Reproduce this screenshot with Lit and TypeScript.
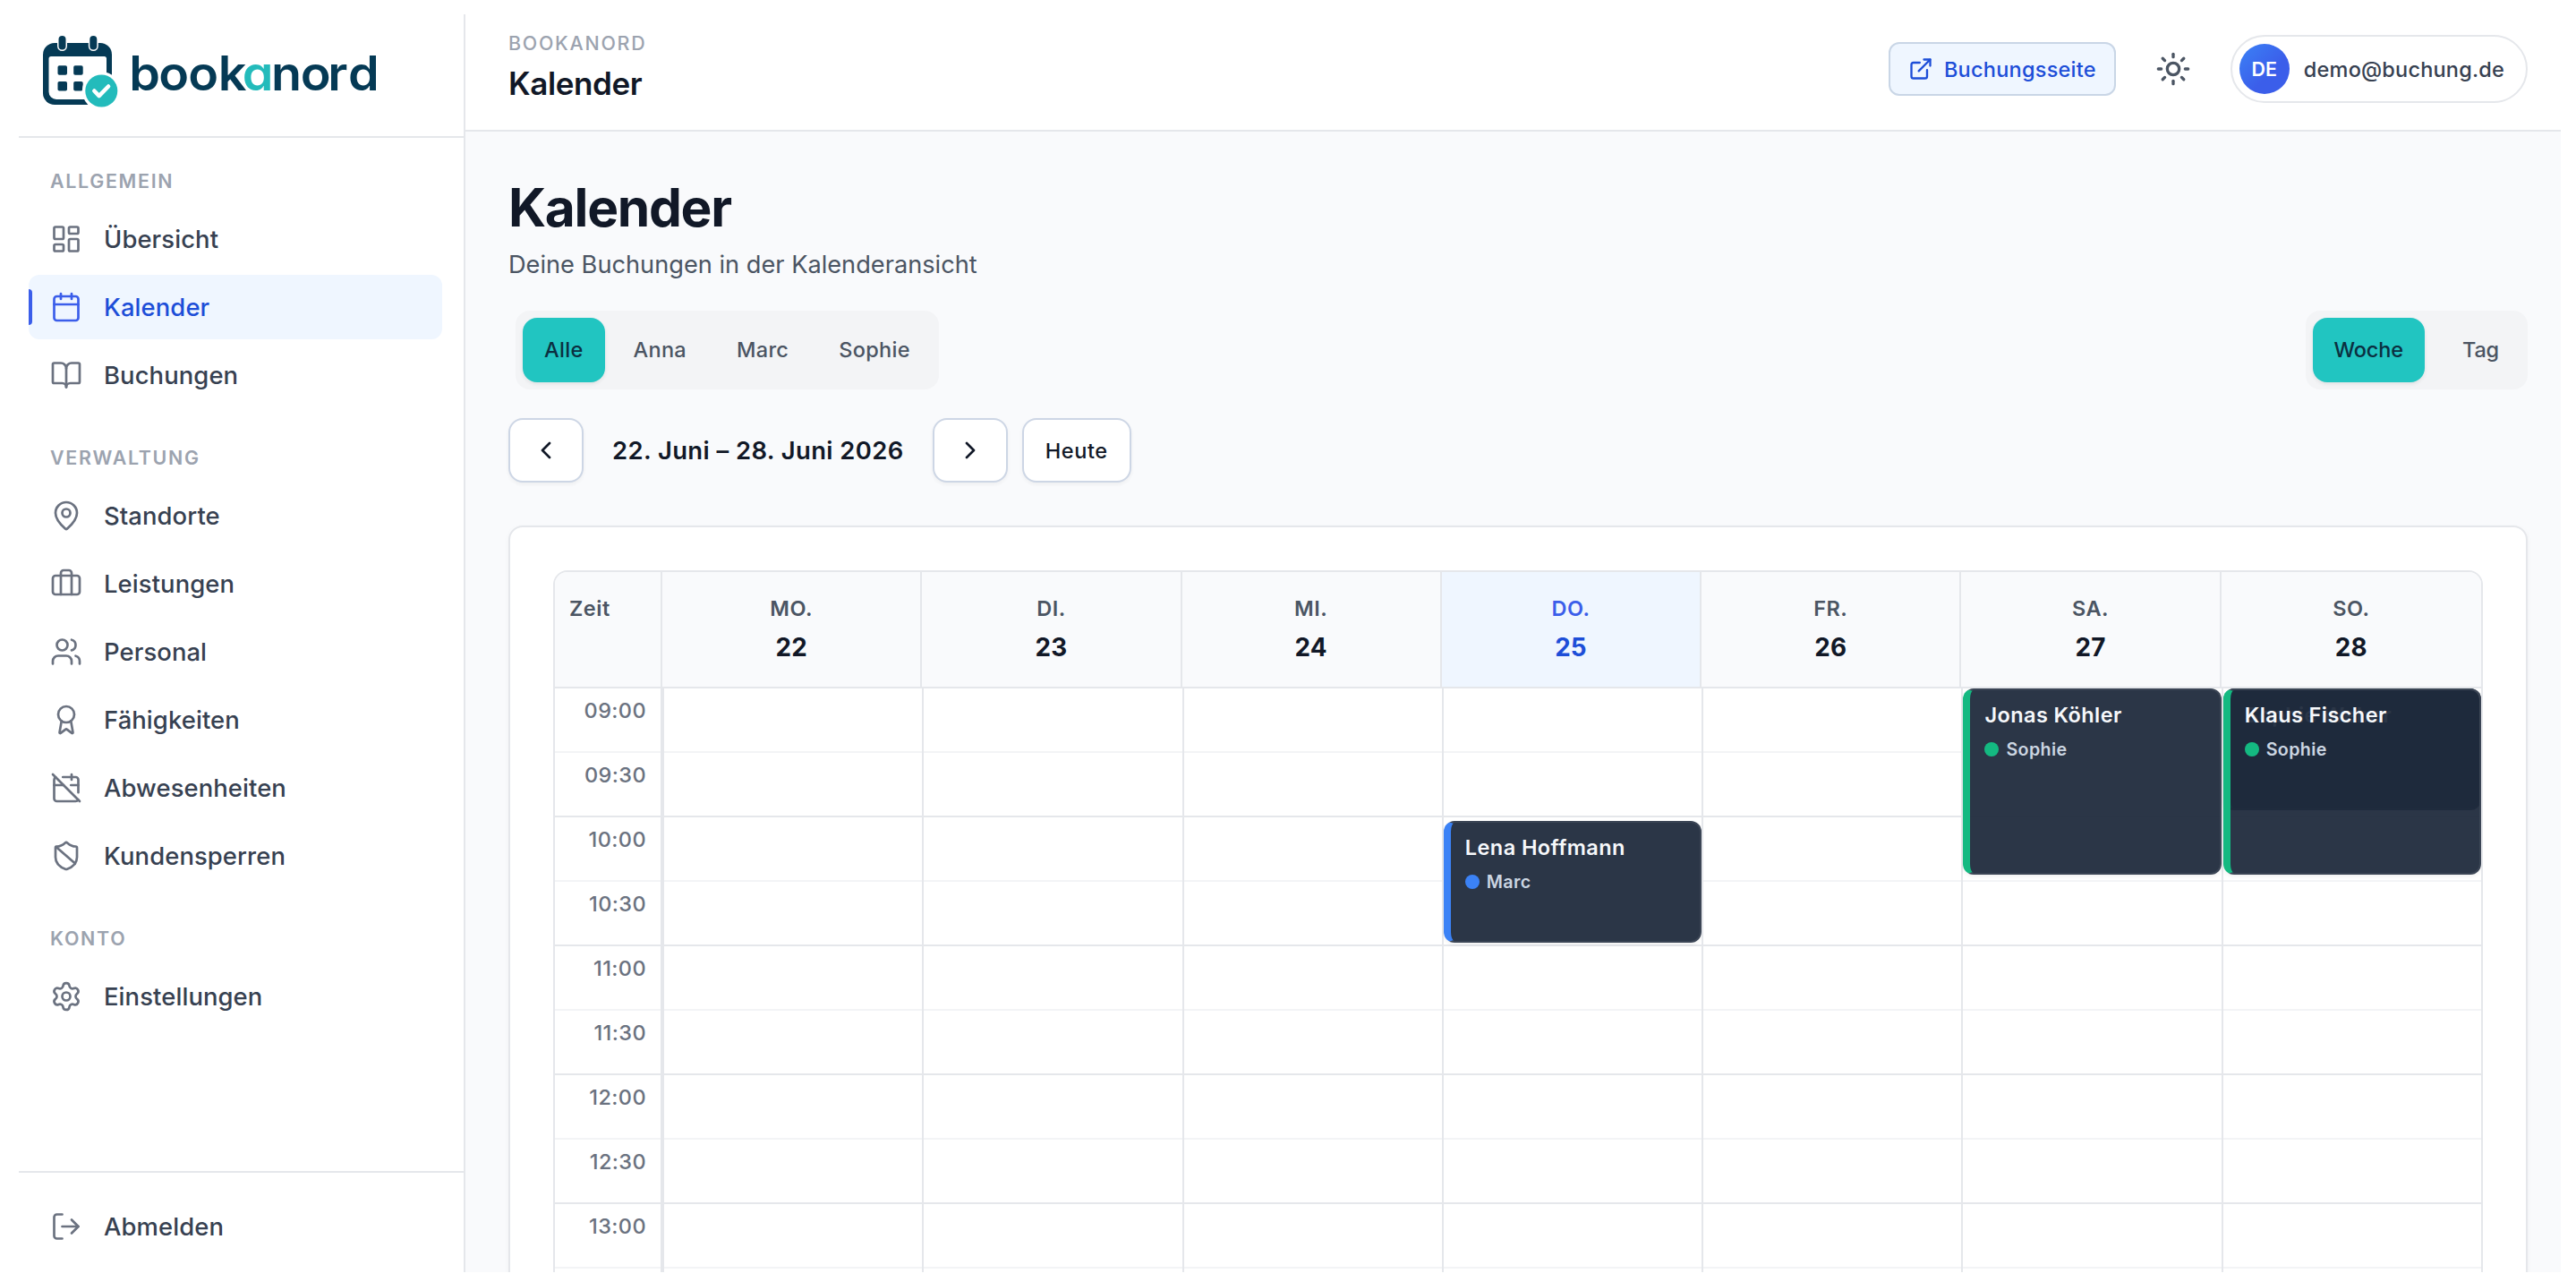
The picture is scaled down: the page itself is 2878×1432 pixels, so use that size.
import { LitElement, html, css, svg } from 'lit';
import { customElement } from 'lit/decorators.js';
import { classMap } from 'lit/directives/class-map.js';

// 24x24 stroke icons
const ICONS = {
    dashboard: svg`<rect width="7" height="9" x="3" y="3" rx="1"/><rect width="7" height="5" x="14" y="3" rx="1"/><rect width="7" height="9" x="14" y="12" rx="1"/><rect width="7" height="5" x="3" y="16" rx="1"/>`,
    calendar: svg`<path d="M8 2v4"/><path d="M16 2v4"/><rect width="18" height="18" x="3" y="4" rx="2"/><path d="M3 10h18"/>`,
    book: svg`<path d="M12 7v14"/><path d="M3 18a1 1 0 0 1-1-1V4a1 1 0 0 1 1-1h5a4 4 0 0 1 4 4 4 4 0 0 1 4-4h5a1 1 0 0 1 1 1v13a1 1 0 0 1-1 1h-6a3 3 0 0 0-3 3 3 3 0 0 0-3-3z"/>`,
    pin: svg`<path d="M20 10c0 4.993-5.539 10.193-7.399 11.799a1 1 0 0 1-1.202 0C9.539 20.193 4 14.993 4 10a8 8 0 0 1 16 0"/><circle cx="12" cy="10" r="3"/>`,
    briefcase: svg`<path d="M16 20V4a2 2 0 0 0-2-2h-4a2 2 0 0 0-2 2v16"/><rect width="20" height="14" x="2" y="6" rx="2"/>`,
    users: svg`<path d="M16 21v-2a4 4 0 0 0-4-4H6a4 4 0 0 0-4 4v2"/><circle cx="9" cy="7" r="4"/><path d="M22 21v-2a4 4 0 0 0-3-3.87"/><path d="M16 3.13a4 4 0 0 1 0 7.75"/>`,
    award: svg`<path d="m15.477 12.89 1.515 8.526a.5.5 0 0 1-.81.47l-3.58-2.687a1 1 0 0 0-1.197 0l-3.586 2.686a.5.5 0 0 1-.81-.469l1.514-8.526"/><circle cx="12" cy="8" r="6"/>`,
    calendarOff: svg`<path d="M4.2 4.2A2 2 0 0 0 3 6v14a2 2 0 0 0 2 2h14a2 2 0 0 0 1.82-1.18"/><path d="M21 15.5V6a2 2 0 0 0-2-2H9.5"/><path d="M16 2v4"/><path d="M3 10h7"/><path d="M21 10h-5.5"/><path d="m2 2 20 20"/>`,
    shield: svg`<path d="M20 13c0 5-3.5 7.5-7.66 8.95a1 1 0 0 1-.67-.01C7.5 20.5 4 18 4 13V6a1 1 0 0 1 1-1c2 0 4.5-1.2 6.24-2.72a1.17 1.17 0 0 1 1.52 0C14.51 3.81 17 5 19 5a1 1 0 0 1 1 1z"/><path d="m4.243 5.21 14.39 12.472"/>`,
    settings: svg`<path d="M9.671 4.136a2.34 2.34 0 0 1 4.659 0 2.34 2.34 0 0 0 3.319 1.915 2.34 2.34 0 0 1 2.33 4.033 2.34 2.34 0 0 0 0 3.831 2.34 2.34 0 0 1-2.33 4.033 2.34 2.34 0 0 0-3.319 1.915 2.34 2.34 0 0 1-4.659 0 2.34 2.34 0 0 0-3.32-1.915 2.34 2.34 0 0 1-2.33-4.033 2.34 2.34 0 0 0 0-3.831A2.34 2.34 0 0 1 6.35 6.051a2.34 2.34 0 0 0 3.319-1.915"/><circle cx="12" cy="12" r="3"/>`,
    logout: svg`<path d="m16 17 5-5-5-5"/><path d="M21 12H9"/><path d="M9 21H5a2 2 0 0 1-2-2V5a2 2 0 0 1 2-2h4"/>`,
    external: svg`<path d="M15 3h6v6"/><path d="M10 14 21 3"/><path d="M18 13v6a2 2 0 0 1-2 2H5a2 2 0 0 1-2-2V8a2 2 0 0 1 2-2h6"/>`,
    sun: svg`<circle cx="12" cy="12" r="4"/><path d="M12 2v2"/><path d="M12 20v2"/><path d="m4.93 4.93 1.41 1.41"/><path d="m17.66 17.66 1.41 1.41"/><path d="M2 12h2"/><path d="M20 12h2"/><path d="m6.34 17.66-1.41 1.41"/><path d="m19.07 4.93-1.41 1.41"/>`,
    left: svg`<path d="m15 18-6-6 6-6"/>`,
    right: svg`<path d="m9 18 6-6-6-6"/>`,
};

type IconName = keyof typeof ICONS;

const icon = (name: IconName, size = 36, stroke = 1.8) => html`
    <svg class="icon" width=${size} height=${size} viewBox="0 0 24 24" fill="none" stroke="currentColor"
        stroke-width=${stroke} stroke-linecap="round" stroke-linejoin="round">${ICONS[name]}</svg>
`;

interface NavItem {
    label: string;
    icon: IconName;
    active?: boolean;
}

const NAV: { title: string; items: NavItem[] }[] = [
    {
        title: 'Allgemein',
        items: [
            { label: 'Übersicht', icon: 'dashboard' },
            { label: 'Kalender', icon: 'calendar', active: true },
            { label: 'Buchungen', icon: 'book' },
        ],
    },
    {
        title: 'Verwaltung',
        items: [
            { label: 'Standorte', icon: 'pin' },
            { label: 'Leistungen', icon: 'briefcase' },
            { label: 'Personal', icon: 'users' },
            { label: 'Fähigkeiten', icon: 'award' },
            { label: 'Abwesenheiten', icon: 'calendarOff' },
            { label: 'Kundensperren', icon: 'shield' },
        ],
    },
    {
        title: 'Konto',
        items: [{ label: 'Einstellungen', icon: 'settings' }],
    },
];

interface Booking {
    name: string;
    staff: string;
    color: string;
    top: number;
    height: number;
}

const GREEN = '#14b981';
const BLUE = '#3b82f6';

const DAYS: { name: string; date: number; today?: boolean; bookings?: Booking[] }[] = [
    { name: 'Mo.', date: 22 },
    { name: 'Di.', date: 23 },
    { name: 'Mi.', date: 24 },
    { name: 'Do.', date: 25, today: true, bookings: [{ name: 'Lena Hoffmann', staff: 'Marc', color: BLUE, top: 148, height: 136 }] },
    { name: 'Fr.', date: 26 },
    { name: 'Sa.', date: 27, bookings: [{ name: 'Jonas Köhler', staff: 'Sophie', color: GREEN, top: 0, height: 208 }] },
    {
        name: 'So.',
        date: 28,
        bookings: [
            { name: 'Sophie Weber', staff: 'Sophie', color: GREEN, top: 0, height: 136 },
            { name: 'Klaus Fischer', staff: 'Sophie', color: GREEN, top: 0, height: 208 },
        ],
    },
];

const TIMES = ['09:00', '09:30', '10:00', '10:30', '11:00', '11:30', '12:00', '12:30', '13:00', '13:30'];

@customElement('book-sidebar')
export class BookSidebar extends LitElement {
    static styles = css`
        :host {
            display: flex;
            flex-direction: column;
            box-sizing: border-box;
            width: 499px;
            flex: none;
            border-right: 2px solid #e5e7eb;
            background: #fff;
        }

        .brand {
            box-sizing: border-box;
            height: 138px;
            padding: 16px 0 0 19px;
            border-bottom: 2px solid #e5e7eb;
        }

        .brand svg {
            display: block;
        }

        .brand text {
            font-family: Inter, sans-serif;
            font-size: 53px;
            font-weight: 600;
            font-feature-settings: 'cv11' 1;
            fill: #053a55;
        }

        .brand .accent {
            fill: #23bbbb;
        }

        nav {
            flex: 1;
            padding: 28px 24px 0 11px;
        }

        .group {
            margin-bottom: 36px;
        }

        .group-title {
            margin-bottom: 9px;
            padding-left: 24px;
            font-size: 21.4px;
            line-height: 40px;
            font-weight: 640;
            letter-spacing: 1.7px;
            text-transform: uppercase;
            color: #9ca3af;
        }

        .item {
            position: relative;
            display: flex;
            align-items: center;
            gap: 24px;
            height: 72px;
            margin-bottom: 4px;
            padding-left: 24px;
            border-radius: 12px;
            font-size: 27.4px;
            font-weight: 540;
            letter-spacing: 0.1px;
            color: #374151;
        }

        .item .icon {
            color: #6b7280;
        }

        .item.active {
            background: #eff6ff;
            color: #1d4ed8;
        }

        .item.active .icon {
            color: #3b5eea;
        }

        .item.active::before {
            content: '';
            position: absolute;
            left: 0;
            top: 16px;
            width: 4px;
            height: 40px;
            border-radius: 0 4px 4px 0;
            background: #3b5eea;
        }

        .item:last-child {
            margin-bottom: 0;
        }

        footer {
            height: 87px;
            padding: 24px 24px 0 11px;
            border-top: 2px solid #e5e7eb;
        }
    `;

    renderItem(item: NavItem) {
        return html`
            <div class=${classMap({ item: true, active: !!item.active })}>
                ${icon(item.icon)}
                <span>${item.label}</span>
            </div>
        `;
    }

    render() {
        return html`
            <div class="brand">
                <svg width="400" height="100" viewBox="40 32 400 100">
                    <rect x="48" y="48" width="77" height="69" rx="13" fill="#053a55"/>
                    <path d="M57 63h59.500a2.500 2.500 0 0 1 2.500 2.500V111H63a8.500 8.500 0 0 1-8.500-8.500V65.500a2.500 2.500 0 0 1 2.500-2.500z" fill="#fff"/>
                    <g fill="#053a55" stroke="#fff" stroke-width="3" paint-order="stroke">
                        <rect x="65.500" y="40" width="8" height="15.500" rx="4"/>
                        <rect x="100.300" y="40" width="8" height="15.500" rx="4"/>
                    </g>
                    <g fill="#053a55">
                        <rect x="64.500" y="73.300" width="10.500" height="10.500" rx="1.800"/>
                        <rect x="82.200" y="73.300" width="10.500" height="10.500" rx="1.800"/>
                        <rect x="64.500" y="91" width="10.500" height="10.500" rx="1.800"/>
                        <rect x="82.200" y="91" width="10.500" height="10.500" rx="1.800"/>
                    </g>
                    <circle cx="113.300" cy="101.500" r="21.500" fill="#fff"/>
                    <circle cx="113.300" cy="101.500" r="18" fill="#23bbbb"/>
                    <path d="m105.300 101.500 5.400 5.600 10.400-10.600" fill="none" stroke="#fff" stroke-width="4.500" stroke-linecap="round" stroke-linejoin="round"/>
                    <text transform="scale(1.050 1)" y="101" x="137.400 168.900 200.200 232.200 257.800 288.500 319.700 348.700 370.500">book<tspan class="accent">a</tspan>nord</text>
                </svg>
            </div>
            <nav>
                ${NAV.map((group) => html`
                    <div class="group">
                        <div class="group-title">${group.title}</div>
                        ${group.items.map((item) => this.renderItem(item))}
                    </div>
                `)}
            </nav>
            <footer>${this.renderItem({ label: 'Abmelden', icon: 'logout' })}</footer>
        `;
    }
}

@customElement('book-week')
export class BookWeek extends LitElement {
    static styles = css`
        :host {
            display: block;
            box-sizing: border-box;
            border: 2px solid #e5e7eb;
            border-radius: 16px;
            overflow: hidden;
            background: #fff;
        }

        .head {
            display: grid;
            grid-template-columns: 120px repeat(7, 1fr);
            height: 128px;
            border-bottom: 2px solid #e5e7eb;
            background: #f9fafc;
        }

        .head > div {
            padding-top: 22px;
            border-right: 2px solid #e5e7eb;
            text-align: center;
            font-size: 23.5px;
            line-height: 37px;
            font-weight: 620;
            color: #4b5563;
        }

        .head > div:last-child {
            border-right: none;
        }

        .head > .zeit {
            padding-left: 16px;
            text-align: left;
            letter-spacing: 0.5px;
        }

        .name {
            text-transform: uppercase;
            letter-spacing: 0.5px;
        }

        .date {
            padding-top: 4px;
            font-size: 27.8px;
            line-height: 42px;
            font-weight: 720;
            letter-spacing: 0.2px;
            color: #111827;
        }

        .head > .today {
            background: #eff6ff;
            color: #3b5eea;
        }

        .today .date {
            color: #1d4ed8;
        }

        .body {
            display: grid;
            grid-template-columns: 120px repeat(7, 1fr);
        }

        .times {
            border-right: 2px solid #e5e7eb;
        }

        .slot {
            box-sizing: border-box;
            height: 72px;
            border-bottom: 2px solid #f3f4f6;
        }

        .slot:nth-child(even) {
            border-bottom-color: #e5e7eb;
        }

        .times .slot {
            padding: 6px 16px 0 0;
            text-align: right;
            font-size: 23.5px;
            line-height: 37px;
            font-weight: 540;
            letter-spacing: 0.4px;
            color: #6b7280;
        }

        .day {
            position: relative;
            border-left: 2px solid #e5e7eb;
        }

        .booking {
            position: absolute;
            left: 0;
            right: 0;
            box-sizing: border-box;
            padding: 10px 16px;
            border: 2px solid #3b4555;
            border-left: 8px solid;
            border-radius: 12px;
            background: rgba(30, 41, 59, 0.94);
            box-shadow: 0 2px 4px rgba(0, 0, 0, 0.06);
        }

        .customer {
            font-size: 23.5px;
            line-height: 36px;
            font-weight: 640;
            letter-spacing: 0.42px;
            color: #f6f8fb;
        }

        .staff {
            display: flex;
            align-items: center;
            gap: 8px;
            margin-top: 4px;
            font-size: 19.7px;
            line-height: 32px;
            font-weight: 560;
            letter-spacing: 0.35px;
            color: #cbd5e1;
        }

        .dot {
            width: 16px;
            height: 16px;
            border-radius: 50%;
        }
    `;

    renderBooking(b: Booking) {
        return html`
            <div class="booking" style="top:${b.top}px;height:${b.height}px;border-left-color:${b.color}">
                <div class="customer">${b.name}</div>
                <div class="staff"><span class="dot" style="background:${b.color}"></span>${b.staff}</div>
            </div>
        `;
    }

    render() {
        return html`
            <div class="head">
                <div class="zeit">Zeit</div>
                ${DAYS.map((day) => html`
                    <div class=${classMap({ today: !!day.today })}>
                        <div class="name">${day.name}</div>
                        <div class="date">${day.date}</div>
                    </div>
                `)}
            </div>
            <div class="body">
                <div class="times">${TIMES.map((time, i) => html`<div class="slot">${i < 9 ? time : ''}</div>`)}</div>
                ${DAYS.map((day) => html`
                    <div class="day">
                        ${TIMES.map(() => html`<div class="slot"></div>`)}
                        ${(day.bookings ?? []).map((b) => this.renderBooking(b))}
                    </div>
                `)}
            </div>
        `;
    }
}

@customElement('app-root')
export class AppRoot extends LitElement {
    static styles = css`
        :host {
            display: flex;
            box-sizing: border-box;
            width: 2878px;
            height: 1432px;
            padding: 16px 17px 11px 21px;
            overflow: hidden;
            background: #fff;
            font-family: Inter, 'Liberation Sans', sans-serif;
        }

        main {
            flex: 1;
            min-width: 0;
            display: flex;
            flex-direction: column;
            overflow: hidden;
            background: #f9fafc;
        }

        header {
            flex: none;
            display: flex;
            align-items: center;
            gap: 24px;
            box-sizing: border-box;
            height: 131px;
            padding: 0 37px 7px 48px;
            border-bottom: 2px solid #e5e7eb;
            background: #fff;
        }

        .titles {
            flex: 1;
            align-self: flex-start;
            padding-top: 16px;
        }

        .crumb {
            font-size: 21.4px;
            line-height: 32px;
            font-weight: 540;
            letter-spacing: 1.75px;
            text-transform: uppercase;
            color: #9ca3af;
        }

        .title {
            margin-top: 7px;
            font-size: 35px;
            line-height: 44px;
            font-weight: 640;
            letter-spacing: -0.4px;
            color: #111827;
        }

        .link {
            display: flex;
            align-items: center;
            gap: 12px;
            box-sizing: border-box;
            height: 60px;
            padding: 0 20px;
            border: 2px solid #c9d6e6;
            border-radius: 12px;
            background: #eff6ff;
            font-size: 23.5px;
            font-weight: 540;
            letter-spacing: 0.25px;
            color: #1d4ed8;
        }

        .theme {
            display: grid;
            place-items: center;
            width: 80px;
            height: 80px;
            color: #4b5563;
        }

        .user {
            display: flex;
            align-items: center;
            gap: 16px;
            box-sizing: border-box;
            height: 76px;
            padding: 0 24px 0 8px;
            border: 2px solid #e5e7eb;
            border-radius: 38px;
            font-size: 23.5px;
            font-weight: 540;
            letter-spacing: 0.2px;
            color: #374151;
        }

        .avatar {
            width: 56px;
            height: 56px;
            border-radius: 50%;
            background: linear-gradient(135deg, #3b82f6, #3b5eea 60%);
            font-size: 21.4px;
            line-height: 56px;
            font-weight: 640;
            text-align: center;
            color: #fff;
        }

        .content {
            padding: 49px 37px 0 48px;
        }

        h1 {
            margin: 0;
            font-size: 58.6px;
            line-height: 72px;
            font-weight: 720;
            letter-spacing: -1.3px;
            color: #111827;
        }

        .subtitle {
            margin: 6px 0 29px;
            font-size: 27.2px;
            line-height: 44px;
            color: #4b5563;
        }

        .filters {
            display: flex;
            justify-content: space-between;
            padding-left: 8px;
        }

        .segments {
            display: flex;
            gap: 8px;
            padding: 8px;
            border-radius: 16px;
            background: #f3f4f6;
        }

        .segments.views {
            gap: 18px;
        }

        .segment {
            box-sizing: border-box;
            min-width: 88px;
            padding: 0 24px;
            border-radius: 16px;
            font-size: 23.5px;
            line-height: 72px;
            font-weight: 540;
            letter-spacing: 0.3px;
            text-align: center;
            color: #4b5563;
        }

        .segment.active {
            background: #21c5c1;
            box-shadow: 0 2px 4px rgba(0, 0, 0, 0.08);
            color: #0b2f40;
        }

        .views .segment {
            letter-spacing: -0.15px;
        }

        .pager {
            display: flex;
            align-items: center;
            gap: 16px;
            margin: 32px 0 48px;
        }

        .button {
            display: grid;
            place-items: center;
            box-sizing: border-box;
            min-width: 84px;
            height: 72px;
            padding: 0 24px;
            border: 2px solid #cdd6e5;
            border-radius: 16px;
            background: #fff;
            box-shadow: 0 2px 4px rgba(0, 0, 0, 0.05);
            font-size: 23.5px;
            font-weight: 550;
            letter-spacing: 0.6px;
            color: #111827;
        }

        .range {
            padding: 0 16px;
            font-size: 27.4px;
            font-weight: 620;
            letter-spacing: 0.42px;
            color: #111827;
        }

        .card {
            box-sizing: border-box;
            height: 1000px;
            padding: 48px;
            border: 2px solid #e5e7eb;
            border-radius: 16px;
            background: #fff;
            box-shadow: 0 2px 6px rgba(0, 0, 0, 0.04);
        }
    `;

    render() {
        return html`
            <book-sidebar></book-sidebar>
            <main>
                <header>
                    <div class="titles">
                        <div class="crumb">Bookanord</div>
                        <div class="title">Kalender</div>
                    </div>
                    <div class="link">${icon('external', 28, 2)}<span>Buchungsseite</span></div>
                    <div class="theme">${icon('sun', 40, 2)}</div>
                    <div class="user">
                        <div class="avatar">DE</div>
                        <span>demo@buchung.de</span>
                    </div>
                </header>
                <div class="content">
                    <h1>Kalender</h1>
                    <p class="subtitle">Deine Buchungen in der Kalenderansicht</p>
                    <div class="filters">
                        <div class="segments">
                            ${['Alle', 'Anna', 'Marc', 'Sophie'].map((name, i) => html`
                                <div class=${classMap({ segment: true, active: i === 0 })}>${name}</div>
                            `)}
                        </div>
                        <div class="segments views">
                            <div class="segment active">Woche</div>
                            <div class="segment">Tag</div>
                        </div>
                    </div>
                    <div class="pager">
                        <div class="button">${icon('left', 32, 2)}</div>
                        <div class="range">22. Juni – 28. Juni 2026</div>
                        <div class="button">${icon('right', 32, 2)}</div>
                        <div class="button">Heute</div>
                    </div>
                    <div class="card"><book-week></book-week></div>
                </div>
            </main>
        `;
    }
}
